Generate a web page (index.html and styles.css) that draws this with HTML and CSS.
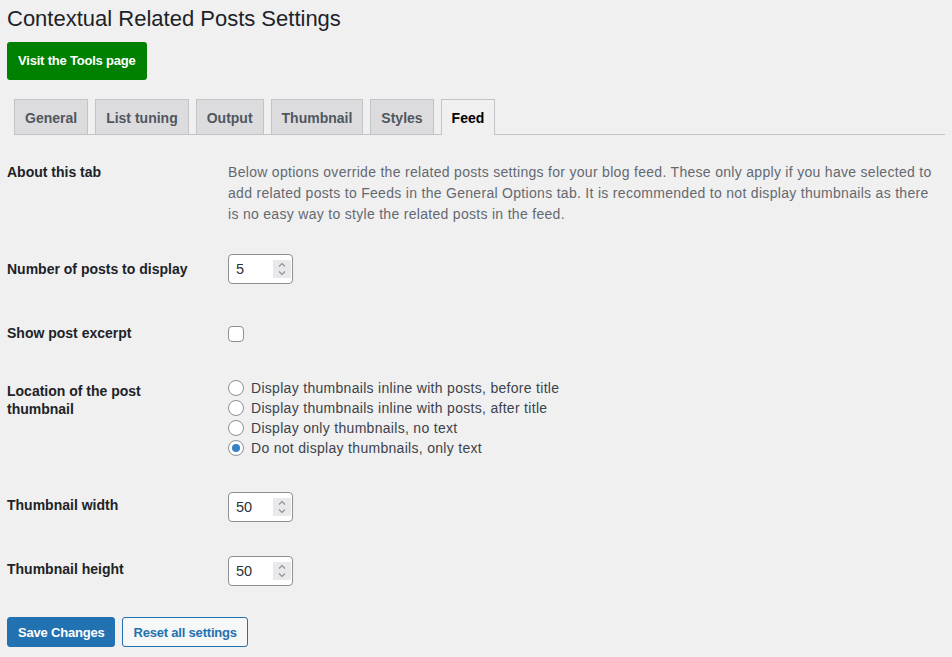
FILE: index.html
```html
<!DOCTYPE html>
<html lang="en">
<head>
<meta charset="utf-8">
<title>Contextual Related Posts Settings</title>
<link rel="stylesheet" href="styles.css">
</head>
<body>
<div class="wrap">
  <h1 class="page-title">Contextual Related Posts Settings</h1>
  <a class="btn-tools" href="#">Visit the Tools page</a>

  <nav class="tabs">
    <a class="tab" href="#">General</a>
    <a class="tab" href="#">List tuning</a>
    <a class="tab" href="#">Output</a>
    <a class="tab" href="#">Thumbnail</a>
    <a class="tab" href="#">Styles</a>
    <a class="tab tab-active" href="#">Feed</a>
  </nav>

  <form class="settings">
    <div class="row row-about">
      <div class="th">About this tab</div>
      <div class="td">
        <p class="description">Below options override the related posts settings for your blog feed. These only apply if you have selected to add related posts to Feeds in the General Options tab. It is recommended to not display thumbnails as there is no easy way to style the related posts in the feed.</p>
      </div>
    </div>

    <div class="row row-number">
      <div class="th">Number of posts to display</div>
      <div class="td">
        <div class="number-field">
          <input class="number-input" type="text" value="5">
          <svg class="spinner" width="18" height="18" viewBox="0 0 18 18"><rect width="18" height="18" fill="#e9e9ec"/><path d="M6 6.5 L9 3.5 L12 6.5 M6 11.5 L9 14.5 L12 11.5" fill="none" stroke="#8f9196" stroke-width="1.1"/></svg>
        </div>
      </div>
    </div>

    <div class="row row-check">
      <div class="th">Show post excerpt</div>
      <div class="td">
        <input class="checkbox" type="checkbox">
      </div>
    </div>

    <div class="row row-radios">
      <div class="th">Location of the post thumbnail</div>
      <div class="td radio-list">
        <label class="radio-line"><input class="radio" type="radio" name="loc">Display thumbnails inline with posts, before title</label>
        <label class="radio-line"><input class="radio" type="radio" name="loc">Display thumbnails inline with posts, after title</label>
        <label class="radio-line"><input class="radio" type="radio" name="loc">Display only thumbnails, no text</label>
        <label class="radio-line"><input class="radio" type="radio" name="loc" checked>Do not display thumbnails, only text</label>
      </div>
    </div>

    <div class="row row-number2">
      <div class="th">Thumbnail width</div>
      <div class="td">
        <div class="number-field">
          <input class="number-input" type="text" value="50">
          <svg class="spinner" width="18" height="18" viewBox="0 0 18 18"><rect width="18" height="18" fill="#e9e9ec"/><path d="M6 6.5 L9 3.5 L12 6.5 M6 11.5 L9 14.5 L12 11.5" fill="none" stroke="#8f9196" stroke-width="1.1"/></svg>
        </div>
      </div>
    </div>

    <div class="row row-number2">
      <div class="th">Thumbnail height</div>
      <div class="td">
        <div class="number-field">
          <input class="number-input" type="text" value="50">
          <svg class="spinner" width="18" height="18" viewBox="0 0 18 18"><rect width="18" height="18" fill="#e9e9ec"/><path d="M6 6.5 L9 3.5 L12 6.5 M6 11.5 L9 14.5 L12 11.5" fill="none" stroke="#8f9196" stroke-width="1.1"/></svg>
        </div>
      </div>
    </div>

    <div class="submit">
      <button class="btn btn-primary" type="button">Save Changes</button>
      <button class="btn btn-secondary" type="button">Reset all settings</button>
    </div>
  </form>
</div>
</body>
</html>
```
FILE: styles.css
```css
* { box-sizing: border-box; }

html, body {
  margin: 0;
  background: #f0f0f1;
}

body {
  font-family: "Liberation Sans", Arial, sans-serif;
  font-size: 14px;
  color: #3c434a;
}

.wrap {
  padding: 0 7px;
}

.page-title {
  margin: 0;
  padding: 4px 0 4px;
  font-size: 22px;
  font-weight: 400;
  line-height: 30px;
  color: #1d2327;
}

.btn-tools {
  display: inline-block;
  margin-top: 4px;
  height: 38px;
  line-height: 38px;
  padding: 0 11px;
  background: #008000;
  color: #fff;
  font-size: 13px;
  font-weight: 700;
  letter-spacing: -0.2px;
  text-decoration: none;
  border-radius: 3px;
}

.tabs {
  display: flex;
  gap: 7px;
  margin: 19px 0 0 7px;
  border-bottom: 1px solid #c3c4c7;
}

.tab {
  display: block;
  padding: 6px 10px 4px;
  line-height: 24px;
  font-size: 14px;
  font-weight: 700;
  color: #50575e;
  background: #dcdcde;
  border: 1px solid #c3c4c7;
  border-bottom: none;
  text-decoration: none;
}

.tab-active {
  background: #f0f0f1;
  color: #000;
  margin-bottom: -1px;
  padding-bottom: 5px;
}

.settings {
  margin-top: 8px;
}

.row {
  display: grid;
  grid-template-columns: 210px 1fr;
  align-items: start;
}

.th {
  padding: 20px 0;
  line-height: 18px;
  font-size: 14px;
  font-weight: 700;
  color: #1d2327;
  width: 200px;
}

.td {
  padding: 15px 10px 15px 11px;
}

.description {
  margin: 4px 0 0;
  font-size: 14px;
  line-height: 21px;
  letter-spacing: 0.3px;
  color: #646970;
}

.row-number .td { padding: 14px 10px 20px 11px; }
.row-check .td { padding: 22px 10px 20px 11px; }
.row-radios .td { padding: 16px 10px 18px 11px; }
.row-number2 .td { padding: 16px 10px 18px 11px; }

.number-field {
  display: flex;
  align-items: center;
  width: 65px;
  height: 30px;
  background: #fff;
  border: 1px solid #8c8f94;
  border-radius: 4px;
  padding-right: 1px;
}

.number-input {
  flex: 1;
  min-width: 0;
  height: 28px;
  border: none;
  outline: none;
  background: transparent;
  padding: 0 0 0 7px;
  font-family: "Liberation Sans", Arial, sans-serif;
  font-size: 14.5px;
  color: #2c3338;
}

.spinner {
  flex: none;
  display: block;
}

.checkbox,
.radio {
  -webkit-appearance: none;
  appearance: none;
  width: 16px;
  height: 16px;
  margin: 0;
  background: #fff;
  border: 1px solid #8c8f94;
  display: block;
}

.checkbox {
  border-radius: 4px;
}

.radio {
  border-radius: 50%;
  flex: none;
  margin-right: 7px;
  position: relative;
}

.radio:checked::before {
  content: "";
  position: absolute;
  left: 3px;
  top: 3px;
  width: 8px;
  height: 8px;
  border-radius: 50%;
  background: #3582c4;
}

.radio-list {
  display: flex;
  flex-direction: column;
}

.radio-line {
  display: flex;
  align-items: center;
  height: 20px;
  line-height: 20px;
  font-size: 14px;
  letter-spacing: 0.3px;
  color: #3c434a;
}

.submit {
  display: flex;
  gap: 7px;
  margin-top: 13px;
}

.btn {
  height: 30px;
  padding: 0 10px;
  font-family: "Liberation Sans", Arial, sans-serif;
  font-size: 13px;
  font-weight: 700;
  letter-spacing: -0.2px;
  border-radius: 3px;
  border: 1px solid #2271b1;
  cursor: pointer;
}

.btn-primary {
  background: #2271b1;
  color: #fff;
}

.btn-secondary {
  background: #f6f7f7;
  color: #2271b1;
}
```
